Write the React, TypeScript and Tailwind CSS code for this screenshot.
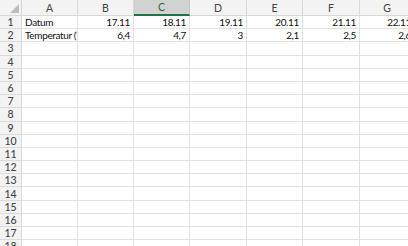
import React from "react";

const cols = ["A", "B", "C", "D", "E", "F", "G"];
const widths = [56, 56, 56, 57, 56, 57, 55];
const data: Record<number, (string | null)[]> = {
  1: ["Datum", "17.11", "18.11", "19.11", "20.11", "21.11", "22.11"],
  2: ["Temperatur (°C)", "6,4", "4,7", "3", "2,1", "2,5", "2,6"],
};

export default function App() {
  const rows = Array.from({ length: 18 }, (_, i) => i + 1);
  return (
    <div
      className="w-[408px] h-[246px] overflow-hidden bg-white text-[10px] text-[#111]"
      style={{ fontFamily: 'Lato, "Liberation Sans", sans-serif' }}
    >
      <div className="flex h-[16px]">
        <div className="relative w-[22px] shrink-0 bg-[#f3f3f3] border-r border-b border-[#d8d8d8]">
          <div className="absolute right-[2px] bottom-[2px] w-0 h-0 border-l-[9px] border-l-transparent border-b-[9px] border-b-[#bdbdbd]" />
        </div>
        {cols.map((c, i) => {
          const sel = c === "C";
          return (
            <div
              key={c}
              style={{ width: widths[i] }}
              className={
                "shrink-0 flex items-center justify-center border-r leading-[14px] text-[10.5px] " +
                (sel
                  ? "bg-[#d2d2d2] border-[#c6c6c6] border-b-2 border-b-[#217346] text-[#1e6b41]"
                  : "bg-[#f3f3f3] border-[#d8d8d8] border-b text-[#444]")
              }
            >
              {c}
            </div>
          );
        })}
      </div>
      {rows.map((r) => (
        <div key={r} className="flex h-[13.2px] overflow-hidden">
          <div className="w-[22px] shrink-0 bg-[#f3f3f3] border-r border-b border-[#dadada] flex items-center justify-center text-[#444] leading-[12px] text-[10.5px] font-medium">
            {r}
          </div>
          {cols.map((c, i) => {
            const v = data[r]?.[i] ?? null;
            const left = i === 0;
            return (
              <div
                key={c}
                style={{ width: widths[i] }}
                className={
                  "shrink-0 border-r border-b border-[#e2e2e2] overflow-hidden whitespace-nowrap flex items-center leading-[12px] tracking-[-0.35px] " +
                  (left ? "justify-start pl-[3px]" : "justify-end pr-[3px]")
                }
              >
                {v}
              </div>
            );
          })}
        </div>
      ))}
    </div>
  );
}
